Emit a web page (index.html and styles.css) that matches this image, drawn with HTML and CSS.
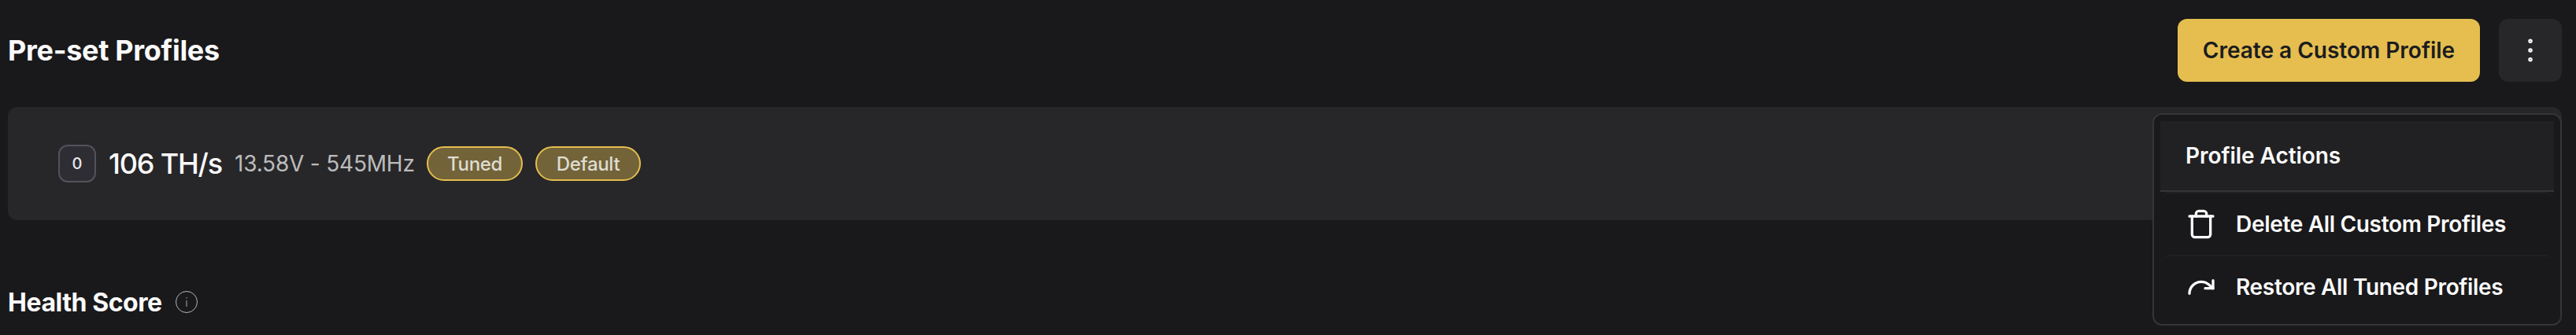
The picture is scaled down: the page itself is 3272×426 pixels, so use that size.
FILE: index.html
```html
<!DOCTYPE html>
<html lang="en">
<head>
<meta charset="utf-8">
<title>Pre-set Profiles</title>
<link rel="stylesheet" href="styles.css">
</head>
<body>
<main class="page">
  <header class="header">
    <h1 class="title"><span>Pre-set Profiles</span></h1>
    <div class="actions">
      <button class="create"><span>Create a Custom Profile</span></button>
      <div class="more-wrap">
        <button class="more" aria-label="Profile actions">
          <svg width="40" height="40" viewBox="0 0 24 24" fill="none" stroke="currentColor" stroke-width="1.3"><circle cx="12" cy="5" r="1"/><circle cx="12" cy="12" r="1"/><circle cx="12" cy="19" r="1"/></svg>
        </button>
        <div class="menu">
          <div class="menu-head"><span>Profile Actions</span></div>
          <button class="item">
            <svg width="40" height="40" viewBox="0 0 24 24" fill="none" stroke="currentColor" stroke-width="2" stroke-linecap="round" stroke-linejoin="round"><path d="M3 6h18"/><path d="M19 6v14c0 1-1 2-2 2H7c-1 0-2-1-2-2V6"/><path d="M8 6V4c0-1 1-2 2-2h4c1 0 2 1 2 2v2"/></svg>
            <span>Delete All Custom Profiles</span>
          </button>
          <button class="item">
            <svg width="40" height="40" viewBox="0 0 24 24" fill="none" stroke="currentColor" stroke-width="2" stroke-linecap="round" stroke-linejoin="round"><path d="M21 7v6h-6"/><path d="M3 17a9 9 0 0 1 9-9 9 9 0 0 1 6 2.300l3 2.700"/></svg>
            <span>Restore All Tuned Profiles</span>
          </button>
        </div>
      </div>
    </div>
  </header>
  <section class="profile">
    <span class="index">0</span>
    <span class="rate">106 TH/s</span>
    <span class="spec">13.58V - 545MHz</span>
    <span class="tag tuned">Tuned</span>
    <span class="tag default">Default</span>
  </section>
  <section class="health">
    <h2 class="health-title"><span>Health Score</span></h2>
    <svg class="info" width="28" height="28" viewBox="0 0 28 28" fill="none" stroke="#b4b4b5"><circle cx="14" cy="14" r="13.500"/><path stroke="#77777a" stroke-width="1.500" d="M14 12V20M14 8V9.500"/></svg>
  </section>
</main>
</body>
</html>
```
FILE: styles.css
```css
* { box-sizing: border-box; }
body {
  margin: 0;
  background: #19191b;
  color: #fafafa;
  font-family: Inter, "Liberation Sans", sans-serif;
}
h1, h2 { margin: 0; }
button { border: 0; padding: 0; margin: 0; font: inherit; color: inherit; background: none; }
span { white-space: nowrap; }
.page { height: 426px; padding: 24px 18px 0 10px; overflow: hidden; }
.header { display: flex; justify-content: space-between; height: 80px; }
.title { display: flex; align-items: center; font-size: 36px; font-weight: 700; letter-spacing: -0.3px; }
.actions { display: flex; gap: 24px; }
.create {
  width: 384px;
  height: 80px;
  border-radius: 12px;
  background: #e5be4f;
  color: #1c1c1f;
  font-size: 28px;
  font-weight: 600;
}
.more-wrap { position: relative; }
.more {
  display: flex;
  align-items: center;
  justify-content: center;
  width: 80px;
  height: 80px;
  border-radius: 12px;
  background: #27272a;
}
.menu {
  position: absolute;
  top: 120px;
  right: 0;
  width: 520px;
  padding: 8px;
  border: 2px solid #353538;
  border-radius: 12px;
  background: #19191b;
  font-size: 28px;
  font-weight: 600;
  letter-spacing: -0.05px;
}
.menu-head {
  display: flex;
  align-items: center;
  height: 90px;
  padding-left: 32px;
  border-bottom: 2px solid #353538;
  background: #212123;
}
.item {
  display: flex;
  align-items: center;
  gap: 24px;
  width: 100%;
  height: 80px;
  padding-left: 32px;
  border-top: 2px solid #202022;
  border-radius: 12px;
  letter-spacing: -0.32px;
}
.profile {
  display: flex;
  align-items: center;
  gap: 16px;
  height: 144px;
  margin-top: 32px;
  padding-left: 64px;
  border-radius: 12px;
  background: #272729;
}
.index {
  display: flex;
  align-items: center;
  justify-content: center;
  width: 48px;
  height: 48px;
  border: 2px solid #53525c;
  border-radius: 12px;
  background: #2e2d33;
  font-size: 20px;
  font-weight: 500;
  color: #e8e8ea;
}
.rate { width: 144px; font-size: 36px; font-weight: 500; letter-spacing: -1.2px; }
.spec { width: 228px; font-size: 28px; font-weight: 400; color: #bcbcbd; letter-spacing: -0.2px; }
.tag {
  display: flex;
  align-items: center;
  justify-content: center;
  height: 44px;
  border: 2px solid #e5be4f;
  border-radius: 22px;
  background: #726338;
  color: #dfdcd2;
  font-size: 24px;
  font-weight: 500;
  letter-spacing: -0.3px;
}
.tuned { width: 122px; }
.default { width: 134px; }
.health { display: flex; align-items: center; gap: 17px; margin-top: 80px; height: 48px; }
.health-title { font-size: 32px; font-weight: 700; letter-spacing: -0.44px; }
```
